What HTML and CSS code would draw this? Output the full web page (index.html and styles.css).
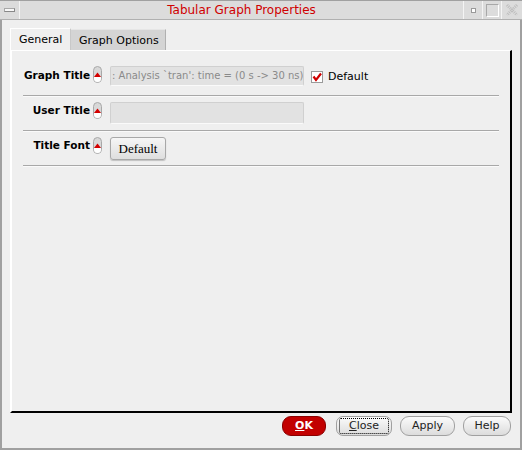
FILE: index.html
```html
<!DOCTYPE html>
<html>
<head>
<meta charset="utf-8">
<link rel="stylesheet" href="styles.css">
</head>
<body>
<div class="window">
  <div class="titlebar">
    <div class="tb-btn menu"><span class="menu-bar"></span></div>
    <div class="title">Tabular Graph Properties</div>
    <div class="tb-btn small"><span class="dot"></span></div>
    <div class="tb-btn small"><span class="sq"></span></div>
    <div class="tb-btn small close">
      <svg width="14" height="14" viewBox="0 0 14 14"><path d="M2 2 L12 12 M12 2 L2 12" stroke="#bdbdbd" stroke-width="3" stroke-dasharray="1 1" fill="none"/></svg>
    </div>
  </div>
  <div class="content">
    <div class="tabs">
      <div class="tab active">General</div>
      <div class="tab inactive">Graph Options</div>
    </div>
    <div class="panel">
      <div class="row first">
        <div class="label">Graph Title</div>
        <svg class="arrow" width="9" height="17" viewBox="0 0 9 17"><rect x="0.5" y="0.5" width="8" height="16" rx="4" fill="#d8d8d8" stroke="#a8a8a8"/><path d="M1 11 L4.5 6.5 L8 11 Z" fill="#d40000"/><path d="M1 11 H8 V12.5 A3.5 3.5 0 0 1 1 12.5 Z" fill="#ffffff"/></svg>
        <div class="field">: Analysis `tran': time = (0 s -&gt; 30 ns)</div>
        <div class="check">
          <svg width="12" height="12" viewBox="0 0 12 12"><rect x="0.5" y="0.5" width="11" height="11" fill="#fff" stroke="#9a9a9a"/><path d="M2.5 5.5 L5 9 L10 2.5" stroke="#d00000" stroke-width="2.2" fill="none"/></svg>
          <span>Default</span>
        </div>
      </div>
      <div class="sep"></div>
      <div class="row">
        <div class="label">User Title</div>
        <svg class="arrow" width="9" height="17" viewBox="0 0 9 17"><rect x="0.5" y="0.5" width="8" height="16" rx="4" fill="#d8d8d8" stroke="#a8a8a8"/><path d="M1 11 L4.5 6.5 L8 11 Z" fill="#d40000"/><path d="M1 11 H8 V12.5 A3.5 3.5 0 0 1 1 12.5 Z" fill="#ffffff"/></svg>
        <div class="field tall"></div>
      </div>
      <div class="sep"></div>
      <div class="row">
        <div class="label">Title Font</div>
        <svg class="arrow" width="9" height="17" viewBox="0 0 9 17"><rect x="0.5" y="0.5" width="8" height="16" rx="4" fill="#d8d8d8" stroke="#a8a8a8"/><path d="M1 11 L4.5 6.5 L8 11 Z" fill="#d40000"/><path d="M1 11 H8 V12.5 A3.5 3.5 0 0 1 1 12.5 Z" fill="#ffffff"/></svg>
        <div class="fontbtn">Default</div>
      </div>
      <div class="sep"></div>
    </div>
    <div class="buttons">
      <div class="btn ok"><u>O</u>K</div>
      <div class="btn focus"><span class="focus-ring"><u>C</u>lose</span></div>
      <div class="btn apply">Apply</div>
      <div class="btn help">Help</div>
    </div>
  </div>
</div>
</body>
</html>
```

FILE: styles.css
```css
html, body {
  margin: 0;
  padding: 0;
  background: #efefef;
}
body {
  font-family: "DejaVu Sans", sans-serif;
  font-size: 11px;
  color: #000;
}
.window {
  width: 522px;
  height: 450px;
  box-sizing: border-box;
  border-left: 2px solid #a0a0a0;
  border-right: 2px solid #a0a0a0;
  border-bottom: 2px solid #a0a0a0;
  background: #efefef;
  display: flex;
  flex-direction: column;
}
.titlebar {
  height: 18px;
  background: #dcdcdc;
  border-top: 1px solid #a0a0a0;
  border-bottom: 1px solid #b0b0b0;
  display: flex;
  align-items: stretch;
  margin-left: -2px;
  margin-right: -2px;
}
.tb-btn {
  width: 18px;
  display: flex;
  align-items: center;
  justify-content: center;
  border-left: 1px solid #f4f4f4;
}
.tb-btn.menu {
  width: 19px;
  border-left: none;
  border-right: 1px solid #f4f4f4;
}
.menu-bar {
  width: 9px;
  height: 2px;
  background: #f8f8f8;
  border-top: 1px solid #a8a8a8;
  border-left: 1px solid #a8a8a8;
  border-right: 1px solid #888;
  border-bottom: 1px solid #888;
}
.title {
  flex: 1;
  text-align: center;
  color: #d00000;
  font-size: 12px;
  line-height: 18px;
}
.dot {
  width: 3px;
  height: 3px;
  background: #fff;
  border: 1px solid #999;
}
.sq {
  width: 11px;
  height: 11px;
  border: 1px solid #a8a8a8;
  border-right-color: #fff;
  border-bottom-color: #fff;
}
.tb-btn.close {
  width: 20px;
}
.content {
  flex: 1;
  padding: 8px 8px 0 8px;
  display: flex;
  flex-direction: column;
}
.tabs {
  display: flex;
  align-items: flex-end;
  height: 22px;
}
.tab {
  white-space: nowrap;
  box-sizing: border-box;
  padding: 0 8px;
}
.tab.active {
  width: 61px;
  height: 22px;
  line-height: 21px;
  background: #efefef;
  border-top: 1px solid #fff;
  border-left: 1px solid #fff;
  border-right: 1px solid #c8c8c8;
}
.tab.inactive {
  width: 95px;
  height: 21px;
  line-height: 21px;
  background: #d4d4d4;
  border-top: 1px solid #e6e6e6;
  border-right: 1px solid #b0b0b0;
}
.panel {
  height: 363px;
  box-sizing: border-box;
  border-top: 1px solid #fff;
  border-left: 2px solid #fff;
  border-right: 2px solid #000;
  border-bottom: 2px solid #000;
  padding: 0 11px 0 11px;
  display: flex;
  flex-direction: column;
}
.row {
  display: flex;
  align-items: flex-start;
  height: 33px;
  padding-top: 5px;
  box-sizing: border-box;
}
.row.first {
  height: 44px;
  padding-top: 15px;
}
.label {
  width: 67px;
  display: flex;
  justify-content: flex-end;
  white-space: nowrap;
  font-weight: bold;
  font-size: 10.5px;
  line-height: 16px;
}
.row.first .label {
  margin-top: 1px;
}
.arrow {
  margin-left: 3px;
  flex: none;
}
.field {
  margin-left: 8px;
  width: 194px;
  height: 20px;
  box-sizing: border-box;
  background: #e2e2e2;
  border: 1px solid #d0d0d0;
  border-bottom: 1px solid #fafafa;
  color: #8a8a8a;
  font-size: 10px;
  line-height: 18px;
  padding-left: 1px;
  white-space: nowrap;
  overflow: hidden;
  border-radius: 2px;
}
.field.tall {
  height: 22px;
}
.check {
  margin-left: 7px;
  display: flex;
  align-items: center;
  gap: 5px;
  height: 20px;
}
.check svg { margin-top: 1px; }
.fontbtn {
  margin-left: 8px;
  width: 56px;
  height: 23px;
  box-sizing: border-box;
  border: 1px solid #a8a8a8;
  border-radius: 3px;
  background: linear-gradient(#f6f6f6, #dedede);
  box-shadow: 0 1px 1px #c0c0c0;
  font-family: "Liberation Serif", serif;
  font-size: 13px;
  line-height: 21px;
  text-align: center;
}
.sep {
  height: 1px;
  background: #a8a8a8;
  border-bottom: 1px solid #fafafa;
}
.buttons {
  display: flex;
  justify-content: flex-end;
  gap: 8px;
  padding-top: 3px;
  padding-right: 1px;
}
.btn {
  height: 20px;
  box-sizing: border-box;
  border: 1px solid #a0a0a0;
  border-radius: 9px;
  background: linear-gradient(#fbfbfb, #dcdcdc);
  font-size: 11px;
  line-height: 18px;
  text-align: center;
  padding: 0 4px;
  color: #222;
}
.btn u { text-decoration: underline; }
.btn.ok {
  width: 44px;
  background: #c20000;
  border-color: #8a0000;
  color: #fff;
  font-weight: bold;
  margin-right: 2px;
}
.btn.focus {
  width: 56px;
  padding: 1px 2px;
  border-radius: 7px;
}
.focus-ring {
  display: block;
  height: 16px;
  line-height: 14px;
  border: 1px dotted #000;
  box-sizing: border-box;
  border-radius: 2px;
}
.btn.apply { width: 55px; }
.btn.help { width: 48px; }
```
